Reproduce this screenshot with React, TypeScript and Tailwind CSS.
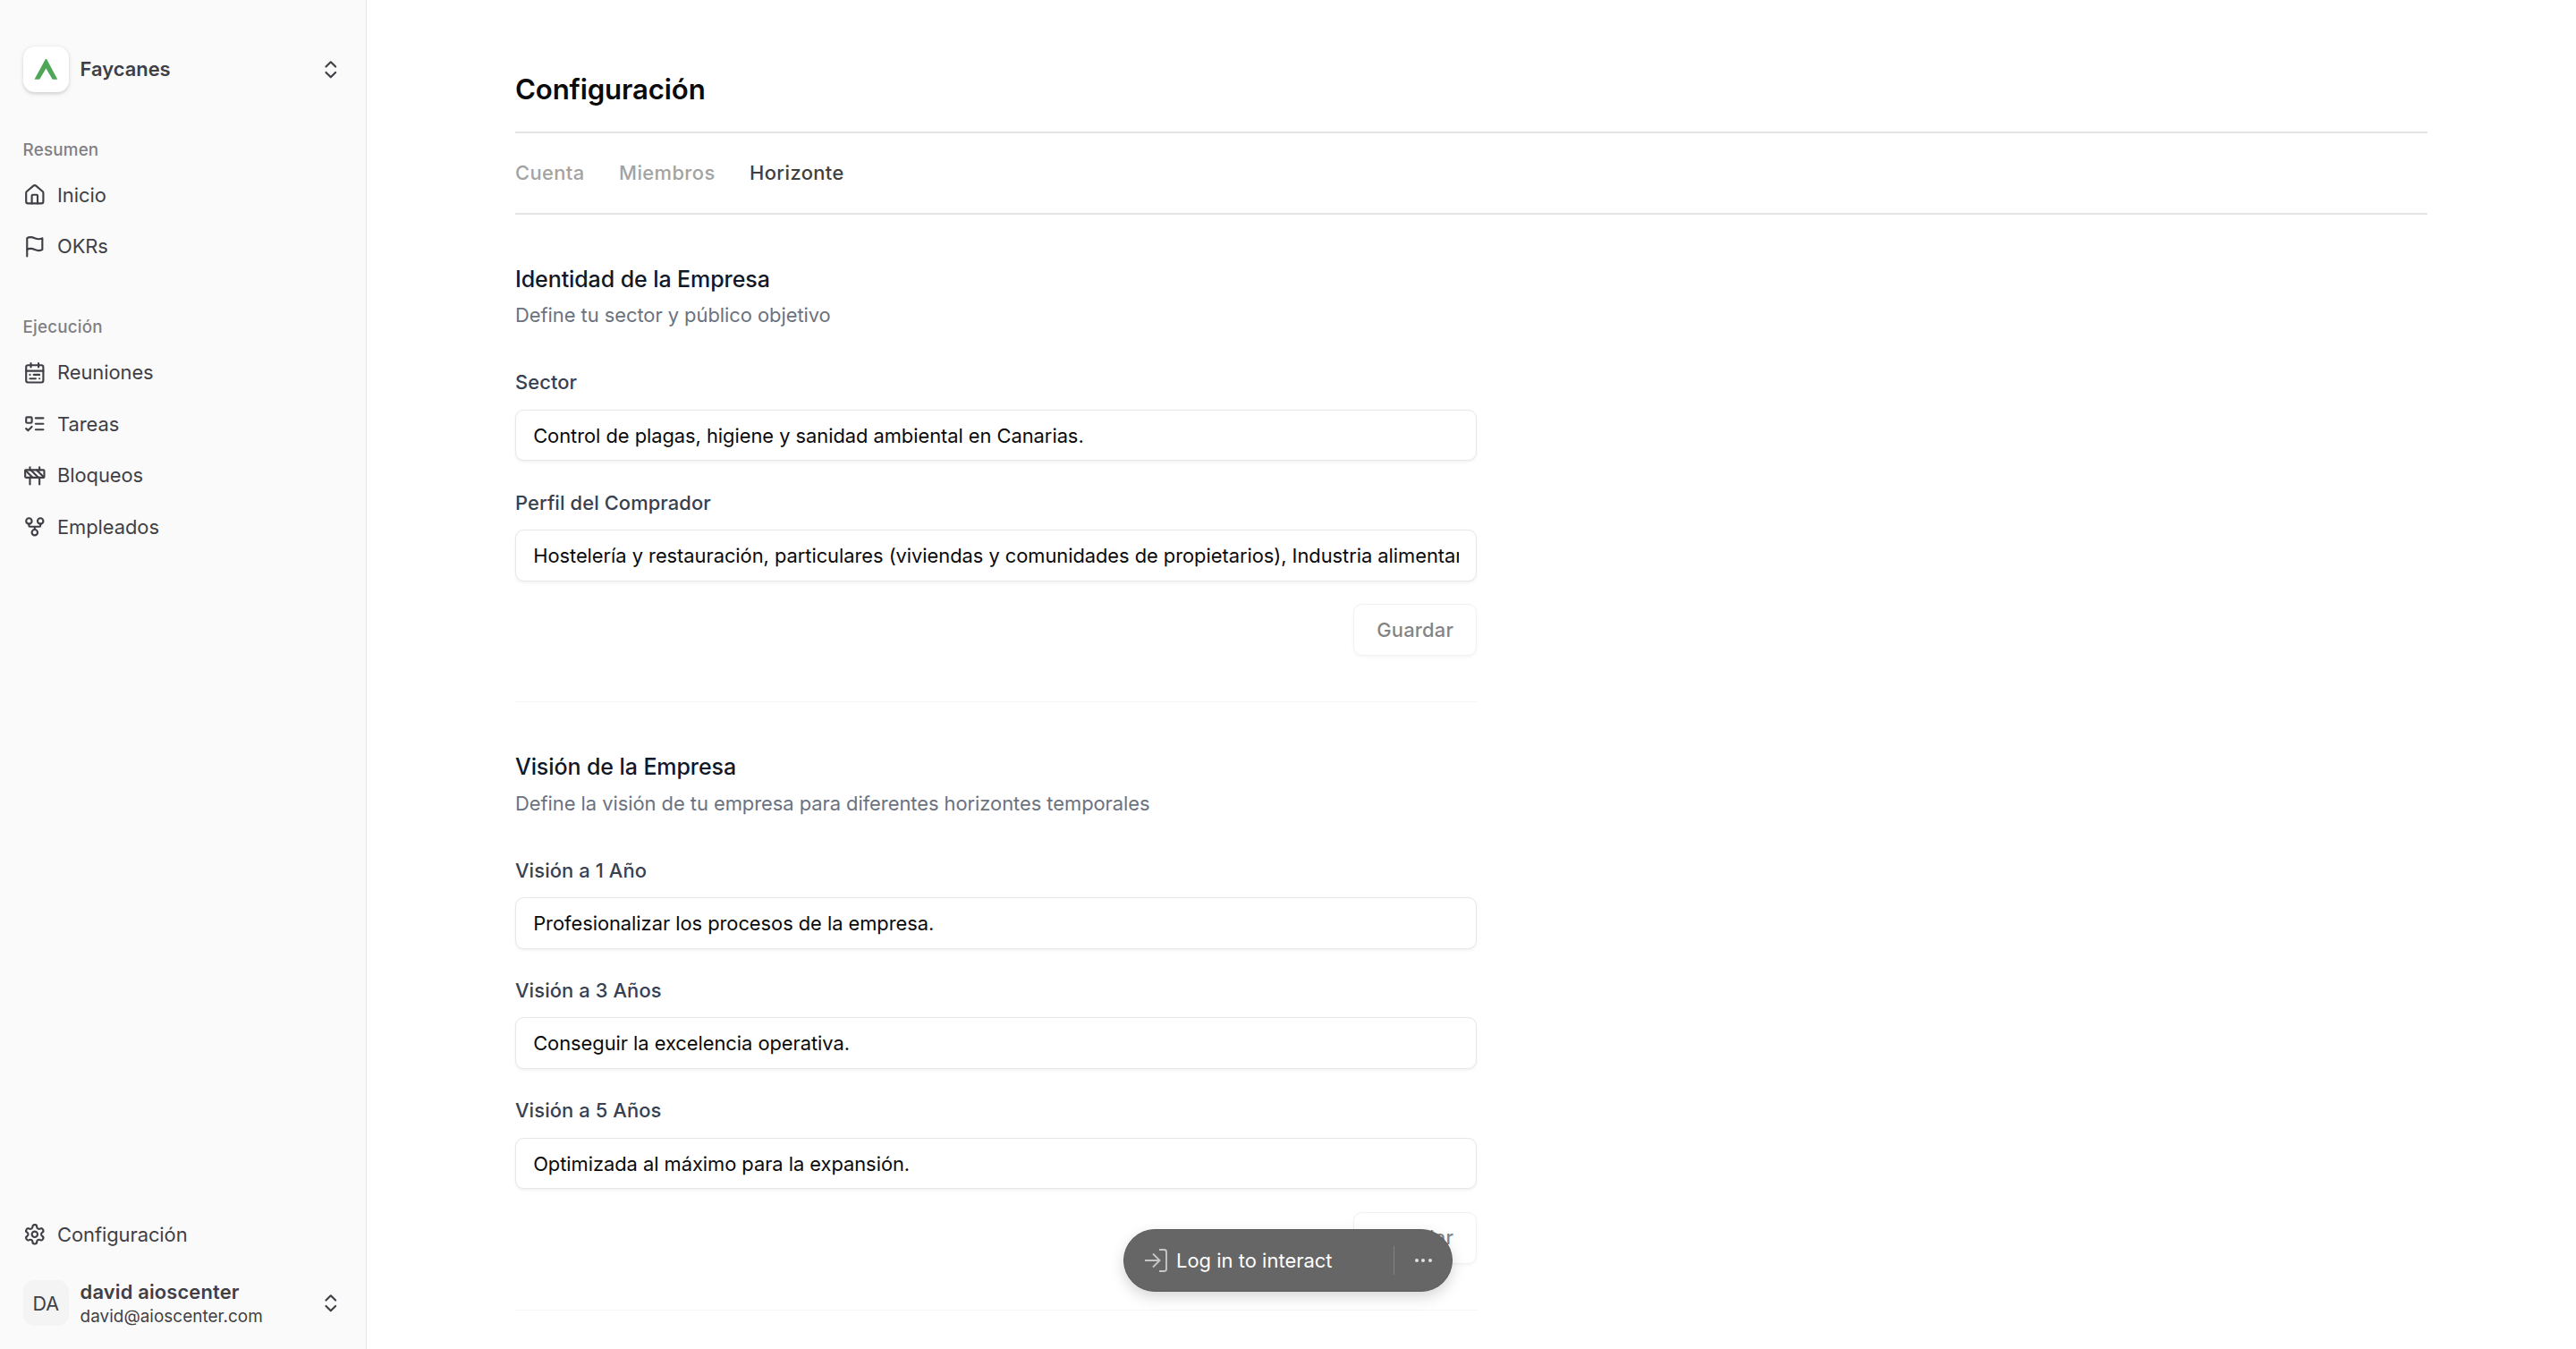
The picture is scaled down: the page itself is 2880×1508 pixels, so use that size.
import type { ReactNode } from "react";

function Icon({ children }: { children: ReactNode }) {
  return (
    <svg
      viewBox="0 0 24 24"
      fill="none"
      stroke="currentColor"
      strokeWidth="2"
      strokeLinecap="round"
      strokeLinejoin="round"
      className="size-[25.6px] shrink-0"
    >
      {children}
    </svg>
  );
}

const HouseIcon = () => (
  <Icon>
    <path d="M15 21v-8a1 1 0 0 0-1-1h-4a1 1 0 0 0-1 1v8" />
    <path d="M3 10a2 2 0 0 1 .709-1.528l7-5.999a2 2 0 0 1 2.582 0l7 5.999A2 2 0 0 1 21 10v9a2 2 0 0 1-2 2H5a2 2 0 0 1-2-2z" />
  </Icon>
);

const FlagIcon = () => (
  <Icon>
    <path d="M4 15s1-1 4-1 5 2 8 2 4-1 4-1V3s-1 1-4 1-5-2-8-2-4 1-4 1z" />
    <path d="M4 22v-7" />
  </Icon>
);

const CalendarIcon = () => (
  <Icon>
    <rect x="3" y="4" width="18" height="18" rx="2" />
    <path d="M16 2v4M3 10h18M8 2v4M17 14h-6M13 18H7M7 14h.01M17 18h.01" />
  </Icon>
);

const TodoIcon = () => (
  <Icon>
    <rect x="3" y="5" width="6" height="6" rx="1" />
    <path d="m3 17 2 2 4-4M13 6h8M13 12h8M13 18h8" />
  </Icon>
);

const BarrierIcon = () => (
  <Icon>
    <rect x="2" y="6" width="20" height="8" rx="1" />
    <path d="M17 14v7M7 14v7M17 3v3M7 3v3M10 14 2.3 6.3M14 6l7.7 7.7M8 6l8 8" />
  </Icon>
);

const ForkIcon = () => (
  <Icon>
    <circle cx="12" cy="18" r="3" />
    <circle cx="6" cy="6" r="3" />
    <circle cx="18" cy="6" r="3" />
    <path d="M18 9v2c0 .6-.4 1-1 1H7c-.6 0-1-.4-1-1V9M12 12v3" />
  </Icon>
);

const GearIcon = () => (
  <Icon>
    <path d="M12.22 2h-.44a2 2 0 0 0-2 2v.18a2 2 0 0 1-1 1.73l-.43.25a2 2 0 0 1-2 0l-.15-.08a2 2 0 0 0-2.73.73l-.22.38a2 2 0 0 0 .73 2.73l.15.1a2 2 0 0 1 1 1.72v.51a2 2 0 0 1-1 1.74l-.15.09a2 2 0 0 0-.73 2.73l.22.38a2 2 0 0 0 2.73.73l.15-.08a2 2 0 0 1 2 0l.43.25a2 2 0 0 1 1 1.73V20a2 2 0 0 0 2 2h.44a2 2 0 0 0 2-2v-.18a2 2 0 0 1 1-1.73l.43-.25a2 2 0 0 1 2 0l.15.08a2 2 0 0 0 2.73-.73l.22-.39a2 2 0 0 0-.73-2.73l-.15-.08a2 2 0 0 1-1-1.74v-.5a2 2 0 0 1 1-1.74l.15-.09a2 2 0 0 0 .73-2.73l-.22-.38a2 2 0 0 0-2.73-.73l-.15.08a2 2 0 0 1-2 0l-.43-.25a2 2 0 0 1-1-1.73V4a2 2 0 0 0-2-2z" />
    <circle cx="12" cy="12" r="3" />
  </Icon>
);

const ChevronsIcon = () => (
  <Icon>
    <path d="m7 15 5 5 5-5M7 9l5-5 5 5" />
  </Icon>
);

function NavItem({ icon, label }: { icon: ReactNode; label: string }) {
  return (
    <a className="flex h-[51.2px] items-center gap-[12.8px] text-[21.9px] tracking-[-0.05px]">
      {icon}
      <span>{label}</span>
    </a>
  );
}

function NavGroup({ title, children }: { title: string; children: ReactNode }) {
  return (
    <div>
      <div className="flex h-[50.6px] items-center pt-px text-[18.8px] font-medium tracking-[0.2px] text-[#7f7f84]">
        {title}
      </div>
      <nav className="flex flex-col gap-[6.4px]">{children}</nav>
    </div>
  );
}

function Sidebar() {
  return (
    <aside className="flex w-[410px] shrink-0 flex-col border-r border-[#e4e4e7] bg-[#fafafa] pt-[52px] pr-[26px] pb-[25.6px] pl-[25.6px] text-[#3f3f46]">
      <div className="flex h-[51.2px] items-center gap-[12.8px]">
        <div className="size-[51.2px] rounded-[12.8px] bg-white shadow-[0_1.6px_4.8px_rgba(0,0,0,0.12),0_1.6px_3.2px_rgba(0,0,0,0.06)]">
          <svg viewBox="0 0 51.2 51.2" className="size-full">
            <path d="M24.9 14h1.2L38.3 36.8h-5.6L25.5 24.6 18.2 36.8h-5.7z" fill="#4fa657" />
          </svg>
        </div>
        <span className="flex-1 text-[21.9px] font-semibold">Faycanes</span>
        <ChevronsIcon />
      </div>

      <div className="mt-[38.8px] flex flex-col gap-[39px]">
        <NavGroup title="Resumen">
          <NavItem icon={<HouseIcon />} label="Inicio" />
          <NavItem icon={<FlagIcon />} label="OKRs" />
        </NavGroup>
        <NavGroup title="Ejecución">
          <NavItem icon={<CalendarIcon />} label="Reuniones" />
          <NavItem icon={<TodoIcon />} label="Tareas" />
          <NavItem icon={<BarrierIcon />} label="Bloqueos" />
          <NavItem icon={<ForkIcon />} label="Empleados" />
        </NavGroup>
      </div>

      <div className="mt-auto">
        <NavItem icon={<GearIcon />} label="Configuración" />
      </div>
      <div className="mt-[25.6px] flex h-[51.2px] items-center gap-[12.8px]">
        <div className="flex size-[51.2px] items-center justify-center rounded-[12.8px] bg-[#f4f4f5] text-[21.5px]">
          DA
        </div>
        <div className="flex flex-1 flex-col pt-px">
          <span className="text-[21.9px] leading-[28px] font-semibold tracking-[0.16px]">david aioscenter</span>
          <span className="text-[18.9px] leading-[27px] tracking-[0.04px]">david@aioscenter.com</span>
        </div>
        <ChevronsIcon />
      </div>
    </aside>
  );
}

function Field({ label, value }: { label: string; value: string }) {
  return (
    <label className="flex flex-col gap-[14.4px]">
      <span className="text-[21.9px] leading-[32px] font-medium tracking-[0.1px] text-[#374151]">{label}</span>
      <input
        readOnly
        defaultValue={value}
        className="h-[57.6px] w-full rounded-[9.6px] border border-[#e5e7eb] bg-white px-[19.2px] text-[21.87px] tracking-[-0.035px] text-[#0a0a0a] shadow-[0_1.6px_3.2px_rgba(0,0,0,0.05)] outline-none"
      />
    </label>
  );
}

function Section({
  title,
  description,
  fields,
}: {
  title: string;
  description: string;
  fields: { label: string; value: string }[];
}) {
  return (
    <section className="w-[1075.2px] border-b border-[#f3f4f6] pt-[52.8px] pb-[51.2px]">
      <h2 className="text-[25px] leading-[38px] font-medium tracking-[-0.09px] text-[#111827]">{title}</h2>
      <p className="mt-[5.6px] text-[21.95px] leading-[32px] tracking-[-0.06px] text-[#6b7280]">{description}</p>
      <div className="mt-[43.1px] flex flex-col gap-[30.4px]">
        {fields.map((f) => (
          <Field key={f.label} {...f} />
        ))}
      </div>
      <div className="mt-[25.6px] flex justify-end">
        <button className="h-[57.6px] w-[138px] rounded-[9.6px] border border-[#e5e5e5] bg-white text-[21.9px] font-medium tracking-[0.2px] text-[#0a0a0a] opacity-50 shadow-[0_1.6px_3.2px_rgba(0,0,0,0.05)]">
          Guardar
        </button>
      </div>
    </section>
  );
}

function LoginPill() {
  return (
    <div className="absolute top-[1374px] left-[1256px] flex h-[70px] w-[368px] items-center rounded-full border border-[#5c5c5c] bg-[#666666] pl-[21px] shadow-[0_6px_16px_rgba(0,0,0,0.16)]">
      <svg viewBox="0 0 30 30" fill="none" stroke="#c6c6c6" strokeWidth="1.9" className="size-[30px] shrink-0">
        <path d="M2 15h16.5M11 7.5l7.5 7.5-7.5 7.5M18 3h5.5q2.5 0 2.5 2.5v19q0 2.500-2.500 2.500H18" />
      </svg>
      <span className="ml-[7px] flex-1 text-[21.9px] tracking-[0.04px] text-white">Log in to interact</span>
      <span className="h-[32px] w-px bg-[#858585]" />
      <span className="flex w-[64px] items-center justify-center gap-[3.500px]">
        <i className="size-[4px] rounded-full bg-[#e0e0e0]" />
        <i className="size-[4px] rounded-full bg-[#e0e0e0]" />
        <i className="size-[4px] rounded-full bg-[#e0e0e0]" />
      </span>
    </div>
  );
}

export default function App() {
  return (
    <div className="relative flex h-[1508px] w-[2880px] overflow-hidden bg-white font-['Inter',sans-serif] antialiased">
      <Sidebar />
      <main className="flex-1 px-[166px]">
        <header className="border-b-2 border-[#e4e4e4] pt-[76px] pb-[23px]">
          <h1 className="text-[31.2px] leading-[48px] font-semibold tracking-[-0.15px] text-[#0a0a0a]">
            Configuración
          </h1>
        </header>
        <nav className="flex h-[91px] items-center gap-[38.4px] border-b-2 border-[#e4e4e4] text-[21.9px] font-medium tracking-[0.4px] text-[#a3a3a3]">
          <a>Cuenta</a>
          <a>Miembros</a>
          <a className="text-[#404040]">Horizonte</a>
        </nav>
        <Section
          title="Identidad de la Empresa"
          description="Define tu sector y público objetivo"
          fields={[
            { label: "Sector", value: "Control de plagas, higiene y sanidad ambiental en Canarias." },
            {
              label: "Perfil del Comprador",
              value:
                "Hostelería y restauración, particulares (viviendas y comunidades de propietarios), Industria alimentaria",
            },
          ]}
        />
        <Section
          title="Visión de la Empresa"
          description="Define la visión de tu empresa para diferentes horizontes temporales"
          fields={[
            { label: "Visión a 1 Año", value: "Profesionalizar los procesos de la empresa." },
            { label: "Visión a 3 Años", value: "Conseguir la excelencia operativa." },
            { label: "Visión a 5 Años", value: "Optimizada al máximo para la expansión." },
          ]}
        />
      </main>
      <LoginPill />
    </div>
  );
}
